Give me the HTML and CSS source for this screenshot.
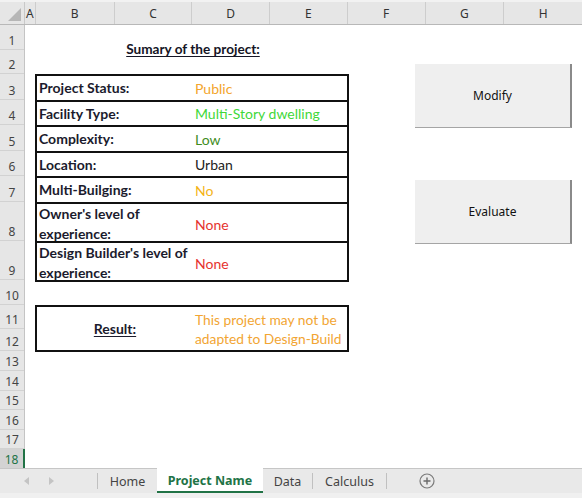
FILE: index.html
```html
<!DOCTYPE html>
<html>
<head>
<meta charset="utf-8">
<link rel="stylesheet" href="styles.css">
</head>
<body>
<div class="app">
  <div class="colheads">
    <div class="corner"><span class="tri"></span></div>
    <div class="ch cA">A</div>
    <div class="ch cB">B</div>
    <div class="ch cC">C</div>
    <div class="ch cD">D</div>
    <div class="ch cE">E</div>
    <div class="ch cF">F</div>
    <div class="ch cG">G</div>
    <div class="ch cH">H</div>
  </div>
  <div class="body">
    <div class="rowheads">
      <div class="rh h25">1</div>
      <div class="rh h24">2</div>
      <div class="rh h26">3</div>
      <div class="rh h25">4</div>
      <div class="rh h26">5</div>
      <div class="rh h25">6</div>
      <div class="rh h26">7</div>
      <div class="rh h39">8</div>
      <div class="rh h39">9</div>
      <div class="rh h25">10</div>
      <div class="rh h24">11</div>
      <div class="rh h22">12</div>
      <div class="rh h20">13</div>
      <div class="rh h20">14</div>
      <div class="rh h19">15</div>
      <div class="rh h20">16</div>
      <div class="rh h19">17</div>
      <div class="rh h19 sel">18</div>
    </div>
    <div class="sheet">
      <div class="title"><span>Sumary of the project:</span></div>
      <div class="summary">
        <div class="srow h26"><div class="lbl">Project Status:</div><div class="val orange">Public</div></div>
        <div class="srow h25"><div class="lbl">Facility Type:</div><div class="val lime">Multi-Story dwelling</div></div>
        <div class="srow h26"><div class="lbl">Complexity:</div><div class="val green">Low</div></div>
        <div class="srow h25"><div class="lbl">Location:</div><div class="val dark">Urban</div></div>
        <div class="srow h26"><div class="lbl">Multi-Builging:</div><div class="val yellow">No</div></div>
        <div class="srow h39"><div class="lbl">Owner's level of<br>experience:</div><div class="val red">None</div></div>
        <div class="srow h39 last"><div class="lbl">Design Builder's level of<br>experience:</div><div class="val red">None</div></div>
      </div>
      <div class="result">
        <div class="rlbl"><span>Result:</span></div>
        <div class="rval">This project may not be<br>adapted to Design-Build</div>
      </div>
      <div class="controls">
        <div class="btn">Modify</div>
        <div class="btn">Evaluate</div>
      </div>
    </div>
  </div>
  <div class="tabbar">
    <div class="nav"><span class="arr left"></span><span class="arr right"></span></div>
    <div class="tab home">Home</div>
    <div class="tab active">Project Name</div>
    <div class="tab data">Data</div>
    <div class="tab calc">Calculus</div>
    <div class="add">
      <svg width="16" height="16" viewBox="0 0 16 16"><circle cx="8" cy="8" r="7" fill="none" stroke="#7a7a7a" stroke-width="1.2"/><path d="M8 4.5v7M4.5 8h7" stroke="#6a6a6a" stroke-width="1.4"/></svg>
    </div>
  </div>
</div>
</body>
</html>
```
FILE: styles.css
```css
* { box-sizing: border-box; }
html, body { margin: 0; padding: 0; background: #fff; }
body { width: 582px; height: 498px; overflow: hidden; font-family: Lato, "Liberation Sans", sans-serif; }
.app { width: 582px; height: 498px; display: flex; flex-direction: column; position: relative; }

.colheads { display: flex; height: 25px; background: #e6e6e6; border-top: 2px solid #f2f2f2; border-bottom: 1px solid #b8b8b8; flex: none; }
.corner { width: 25px; position: relative; border-right: 1px solid #c9c9c9; }
.tri { position: absolute; right: 3px; bottom: 3px; width: 0; height: 0; border-left: 13px solid transparent; border-bottom: 13px solid #b6b6b6; }
.ch { display: flex; align-items: center; justify-content: center; font-family: "Noto Sans", sans-serif; font-size: 12px; color: #333; border-right: 1px solid #cdcdcd; padding-top: 1px; }
.cA { width: 11px; }
.cB { width: 79px; }
.cC { width: 78px; }
.cD { width: 78px; }
.cE { width: 78px; }
.cF { width: 78px; }
.cG { width: 79px; }
.cH { width: 78px; border-right: none; }

.body { display: flex; flex: none; height: 443px; position: relative; }
.rowheads { width: 25px; background: #e6e6e6; border-right: 1px solid #c4c4c4; display: flex; flex-direction: column; flex: none; }
.rh { display: flex; align-items: flex-end; justify-content: center; font-family: "Noto Sans", sans-serif; font-size: 12px; color: #444; border-bottom: 1px solid #d2d2d2; padding-bottom: 0; flex: none; }
.rh.sel { background: #d3d3d3; color: #217346; border-right: 2px solid #217346; margin-right: -1px; border-bottom: none; }
.h19 { height: 19px; }
.h20 { height: 20px; }
.h22 { height: 22px; }
.h24 { height: 24px; }
.h25 { height: 25px; }
.h26 { height: 26px; }
.h39 { height: 39px; }

.sheet { flex: 1; display: flex; flex-direction: column; position: relative; padding-left: 10px; }
.title { height: 48px; width: 314px; display: flex; align-items: center; justify-content: center; font-weight: bold; font-size: 13.6px; color: #151525; margin-bottom: 1px; padding-left: 2px; }
.title span { text-decoration: underline; text-underline-offset: 2px; }

.summary { width: 314px; border-left: 2px solid #111; border-right: 2px solid #111; display: flex; flex-direction: column; }
.srow { display: grid; grid-template-columns: 156px 1fr; border-top: 2px solid #111; flex: none; }
.srow.last { border-bottom: 2px solid #111; height: 41px; }
.lbl { font-weight: bold; font-size: 14px; color: #1b1b2d; padding-left: 2px; display: flex; align-items: center; line-height: 20px; }
.val { font-size: 14px; padding-left: 2px; display: flex; align-items: center; }
.orange { color: #f3a52c; }
.lime { color: #3fd83a; }
.green { color: #3f8d1e; }
.dark { color: #222; }
.yellow { color: #f4b418; }
.red { color: #e6332f; }

.result { margin-top: 23px; width: 314px; height: 47px; border: 2px solid #111; display: grid; grid-template-columns: 156px 1fr; }
.rlbl { display: flex; align-items: center; justify-content: center; font-weight: bold; font-size: 14px; color: #1b1b2d; }
.rlbl span { text-decoration: underline; text-underline-offset: 2px; }
.rval { font-size: 13.8px; color: #f2a533; padding-left: 2px; line-height: 19px; display: flex; align-items: center; }

.controls { position: absolute; left: 390px; top: 39px; display: flex; flex-direction: column; gap: 52px; }
.btn { width: 157px; height: 64px; background: #efefef; border-right: 2px solid #8a8a8a; border-bottom: 1px solid #a5a5a5; display: flex; align-items: center; justify-content: center; font-family: "Noto Sans", sans-serif; font-size: 12px; color: #111; }

.tabbar { flex: none; height: 30px; background: #e9e9e9; border-top: 1px solid #c6c6c6; display: flex; align-items: stretch; border-bottom: 5px solid #f0f0f0; font-family: "Noto Sans", sans-serif; font-size: 12.5px; color: #444; }
.nav { width: 98px; display: flex; align-items: center; padding-left: 24px; gap: 20px; border-right: 1px solid #c0c0c0; margin: 4px 0; }
.arr { width: 0; height: 0; border-top: 4px solid transparent; border-bottom: 4px solid transparent; }
.arr.left { border-right: 5px solid #c4c4c4; }
.arr.right { border-left: 5px solid #c4c4c4; }
.tab { display: flex; align-items: center; justify-content: center; padding-top: 1px; }
.home { width: 59px; }
.active { width: 106px; background: #fff; color: #217346; font-weight: bold; border-bottom: 2px solid #217346; margin-top: -1px; }
.data { width: 50px; border-right: 1px solid #c0c0c0; margin: 4px 0; }
.calc { width: 74px; border-right: 1px solid #c0c0c0; margin: 4px 0; }
.add { width: 80px; display: flex; align-items: center; justify-content: center; }
```
